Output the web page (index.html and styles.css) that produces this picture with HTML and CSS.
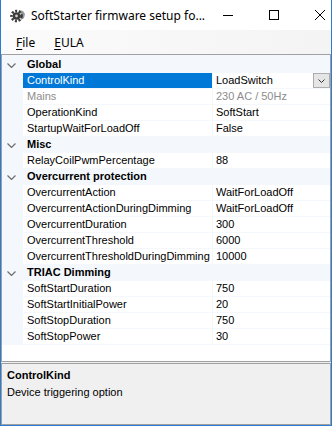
FILE: index.html
```html
<!DOCTYPE html>
<html lang="en">
<head>
    <meta charset="UTF-8">
    <meta name="viewport" content="width=device-width, initial-scale=1.0">
    <title>SoftStarter firmware setup</title>
    <link rel="stylesheet" href="styles.css">
</head>
<body>
    <div class="window">
        <!-- Title bar -->
        <div class="titlebar">
            <svg class="app-icon" width="16" height="16" viewBox="0 0 16 16">
                <path d="M9 3 L13 4 L15 7 L14 11 L11 13 L10 10 L12 8 L10 6 Z" fill="#9a9a9a"/>
                <circle cx="6.5" cy="9" r="5" fill="none" stroke="#3a3a3a" stroke-width="2.6" stroke-dasharray="2 1.6"/>
                <circle cx="6.5" cy="9" r="3.8" fill="#3a3a3a"/>
                <circle cx="6.5" cy="9" r="1.4" fill="#cfcfcf"/>
            </svg>
            <span class="title">SoftStarter firmware setup fo...</span>
            <div class="controls">
                <span class="ctl">
                    <svg width="10" height="10" viewBox="0 0 10 10"><path d="M0 5.5 H10" stroke="#000" stroke-width="1"/></svg>
                </span>
                <span class="ctl">
                    <svg width="10" height="10" viewBox="0 0 10 10"><rect x="0.5" y="0.5" width="9" height="9" fill="none" stroke="#000" stroke-width="1"/></svg>
                </span>
                <span class="ctl">
                    <svg width="10" height="10" viewBox="0 0 10 10"><path d="M0 0 L10 10 M10 0 L0 10" stroke="#000" stroke-width="1"/></svg>
                </span>
            </div>
        </div>

        <!-- Menu -->
        <div class="menubar">
            <span class="menu"><u>F</u>ile</span>
            <span class="menu"><u>E</u>ULA</span>
        </div>

        <!-- Property grid -->
        <div class="grid">
            <div class="cat top">
                <span class="gutter"><svg class="chev" width="9" height="5" viewBox="0 0 9 5"><path d="M0.5 0.5 L4.5 4.5 L8.5 0.5" fill="none" stroke="#6e6e6e" stroke-width="1.2"/></svg></span>
                <span class="cat-name">Global</span>
            </div>
            <div class="row selected">
                <span class="gutter"></span>
                <span class="name">ControlKind</span>
                <span class="value">LoadSwitch
                    <span class="drop"><svg width="7" height="4" viewBox="0 0 7 4"><path d="M0.5 0.5 L3.5 3.5 L6.5 0.5" fill="none" stroke="#333" stroke-width="1"/></svg></span>
                </span>
            </div>
            <div class="row disabled">
                <span class="gutter"></span>
                <span class="name">Mains</span>
                <span class="value">230 AC / 50Hz</span>
            </div>
            <div class="row">
                <span class="gutter"></span>
                <span class="name">OperationKind</span>
                <span class="value">SoftStart</span>
            </div>
            <div class="row">
                <span class="gutter"></span>
                <span class="name">StartupWaitForLoadOff</span>
                <span class="value">False</span>
            </div>

            <div class="cat">
                <span class="gutter"><svg class="chev" width="9" height="5" viewBox="0 0 9 5"><path d="M0.5 0.5 L4.5 4.5 L8.5 0.5" fill="none" stroke="#6e6e6e" stroke-width="1.2"/></svg></span>
                <span class="cat-name">Misc</span>
            </div>
            <div class="row">
                <span class="gutter"></span>
                <span class="name">RelayCoilPwmPercentage</span>
                <span class="value">88</span>
            </div>

            <div class="cat">
                <span class="gutter"><svg class="chev" width="9" height="5" viewBox="0 0 9 5"><path d="M0.5 0.5 L4.5 4.5 L8.5 0.5" fill="none" stroke="#6e6e6e" stroke-width="1.2"/></svg></span>
                <span class="cat-name">Overcurrent protection</span>
            </div>
            <div class="row">
                <span class="gutter"></span>
                <span class="name">OvercurrentAction</span>
                <span class="value">WaitForLoadOff</span>
            </div>
            <div class="row">
                <span class="gutter"></span>
                <span class="name">OvercurrentActionDuringDimming</span>
                <span class="value">WaitForLoadOff</span>
            </div>
            <div class="row">
                <span class="gutter"></span>
                <span class="name">OvercurrentDuration</span>
                <span class="value">300</span>
            </div>
            <div class="row">
                <span class="gutter"></span>
                <span class="name">OvercurrentThreshold</span>
                <span class="value">6000</span>
            </div>
            <div class="row">
                <span class="gutter"></span>
                <span class="name">OvercurrentThresholdDuringDimming</span>
                <span class="value">10000</span>
            </div>

            <div class="cat">
                <span class="gutter"><svg class="chev" width="9" height="5" viewBox="0 0 9 5"><path d="M0.5 0.5 L4.5 4.5 L8.5 0.5" fill="none" stroke="#6e6e6e" stroke-width="1.2"/></svg></span>
                <span class="cat-name">TRIAC Dimming</span>
            </div>
            <div class="row">
                <span class="gutter"></span>
                <span class="name">SoftStartDuration</span>
                <span class="value">750</span>
            </div>
            <div class="row">
                <span class="gutter"></span>
                <span class="name">SoftStartInitialPower</span>
                <span class="value">20</span>
            </div>
            <div class="row">
                <span class="gutter"></span>
                <span class="name">SoftStopDuration</span>
                <span class="value">750</span>
            </div>
            <div class="row">
                <span class="gutter"></span>
                <span class="name">SoftStopPower</span>
                <span class="value">30</span>
            </div>
            <div class="filler"></div>
        </div>

        <!-- Description pane -->
        <div class="doc">
            <div class="doc-title">ControlKind</div>
            <div class="doc-text">Device triggering option</div>
        </div>
    </div>
</body>
</html>
```

FILE: styles.css
```css
/* Reset */
* {
    margin: 0;
    padding: 0;
    box-sizing: border-box;
}

body {
    width: 332px;
    height: 426px;
    overflow: hidden;
    background-color: #fff;
    font-family: "Liberation Sans", Arial, sans-serif;
    font-size: 11px;
    color: #000;
}

/* Window frame */
.window {
    width: 332px;
    height: 426px;
    display: flex;
    flex-direction: column;
    background-color: #f0f0f0;
    border: 1px solid #2b7bd4;
    border-top: none;
}

/* Title bar */
.titlebar {
    height: 30px;
    flex: none;
    display: flex;
    align-items: center;
    background-color: #fff;
}

.app-icon {
    margin-left: 9px;
    flex: none;
}

.title {
    margin-left: 5px;
    font-family: "Noto Sans", sans-serif;
    font-size: 12px;
    white-space: nowrap;
}

.controls {
    margin-left: auto;
    display: flex;
    height: 30px;
}

.ctl {
    width: 46px;
    display: flex;
    align-items: center;
    justify-content: center;
}

/* Menu bar */
.menubar {
    height: 24px;
    flex: none;
    display: flex;
    align-items: center;
    padding-left: 8px;
    background: linear-gradient(to right, #fbfbfb, #f4f4f4);
    font-family: "Noto Sans", sans-serif;
    font-size: 12px;
}

.menu {
    padding: 0 7px;
    margin-right: 5px;
}

.menu u {
    text-decoration-thickness: 1px;
    text-underline-offset: 2px;
}

/* Property grid */
.grid {
    height: 308px;
    flex: none;
    display: flex;
    flex-direction: column;
    border: 1px solid #a0a0a0;
    background-color: #fff;
}

.cat,
.row {
    height: 16px;
    flex: none;
    display: flex;
    line-height: 15px;
}

.cat {
    background-color: #f4f7fc;
}

.cat.top {
    height: 18px;
    padding-top: 2px;
}

.gutter {
    width: 21px;
    flex: none;
    display: flex;
    align-items: center;
    background-color: #f4f7fc;
}

.chev {
    margin-left: 5px;
    margin-top: 1px;
}

.cat-name {
    padding-left: 4px;
    font-weight: bold;
}

.row {
    border-bottom: 1px solid #f4f7fc;
}

.name {
    width: 190px;
    flex: none;
    padding-left: 4px;
    border-right: 1px solid #f4f7fc;
    white-space: nowrap;
    overflow: hidden;
}

.value {
    flex: 1;
    display: flex;
    padding-left: 3px;
    white-space: nowrap;
}

.row.selected .name {
    background-color: #0078d7;
    color: #fff;
}

.row.disabled .name,
.row.disabled .value {
    color: #8d8d8d;
}

.drop {
    margin-left: auto;
    width: 17px;
    height: 15px;
    display: flex;
    align-items: center;
    justify-content: center;
    background-color: #e5e5e5;
    border: 1px solid #adadad;
}

.filler {
    flex: 1;
}

/* Description pane */
.doc {
    height: 62px;
    flex: none;
    margin-top: 1px;
    padding: 4px 5px 0;
    border: 1px solid #a0a0a0;
    background-color: #f0f0f0;
    line-height: 15px;
}

.doc-title {
    font-weight: bold;
}

.doc-text {
    margin-top: 2px;
}
```
